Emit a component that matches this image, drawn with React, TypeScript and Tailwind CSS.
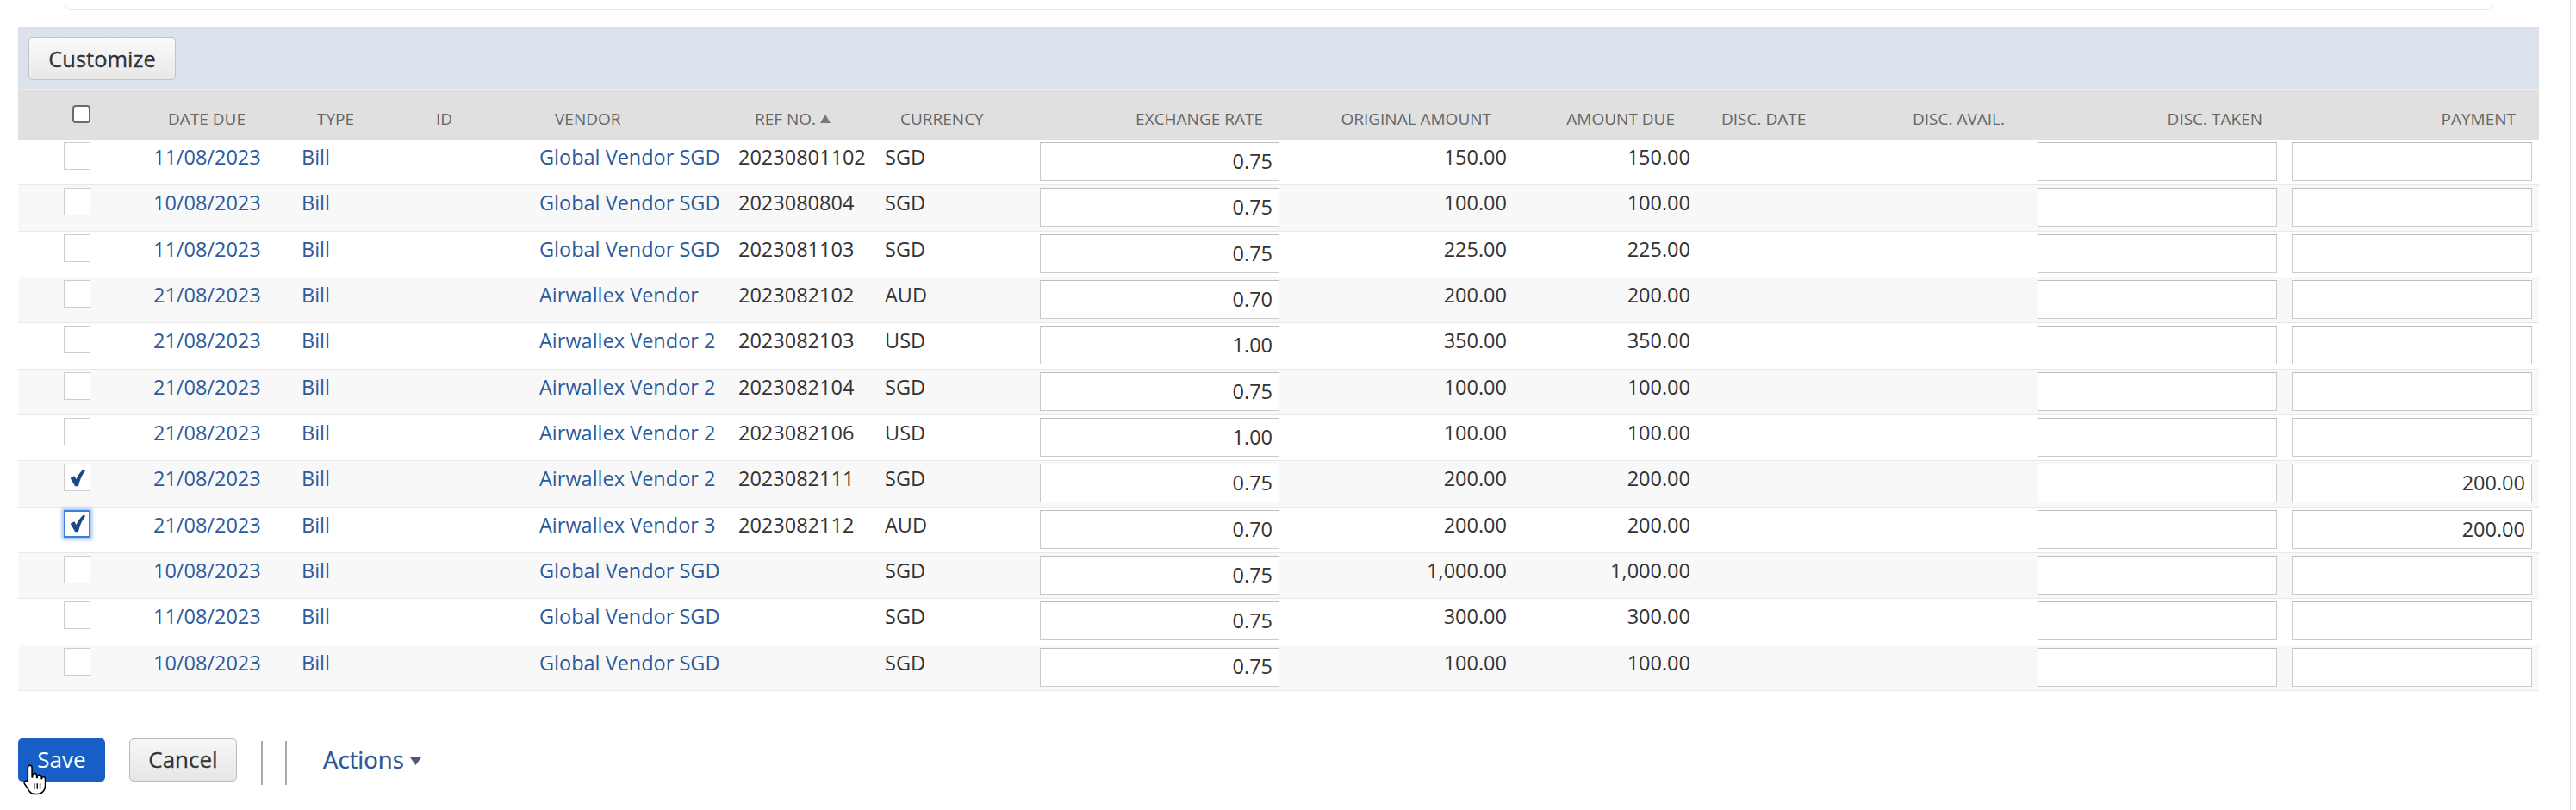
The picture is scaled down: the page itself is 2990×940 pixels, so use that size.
import React from "react";

type Row = {
  date: string;
  vendor: string;
  ref: string;
  cur: string;
  rate: string;
  orig: string;
  due: string;
  checked?: boolean;
  focus?: boolean;
  pay?: string;
};

const rows: Row[] = [
  { date: "11/08/2023", vendor: "Global Vendor SGD", ref: "20230801102", cur: "SGD", rate: "0.75", orig: "150.00", due: "150.00" },
  { date: "10/08/2023", vendor: "Global Vendor SGD", ref: "2023080804", cur: "SGD", rate: "0.75", orig: "100.00", due: "100.00" },
  { date: "11/08/2023", vendor: "Global Vendor SGD", ref: "2023081103", cur: "SGD", rate: "0.75", orig: "225.00", due: "225.00" },
  { date: "21/08/2023", vendor: "Airwallex Vendor", ref: "2023082102", cur: "AUD", rate: "0.70", orig: "200.00", due: "200.00" },
  { date: "21/08/2023", vendor: "Airwallex Vendor 2", ref: "2023082103", cur: "USD", rate: "1.00", orig: "350.00", due: "350.00" },
  { date: "21/08/2023", vendor: "Airwallex Vendor 2", ref: "2023082104", cur: "SGD", rate: "0.75", orig: "100.00", due: "100.00" },
  { date: "21/08/2023", vendor: "Airwallex Vendor 2", ref: "2023082106", cur: "USD", rate: "1.00", orig: "100.00", due: "100.00" },
  { date: "21/08/2023", vendor: "Airwallex Vendor 2", ref: "2023082111", cur: "SGD", rate: "0.75", orig: "200.00", due: "200.00", checked: true, pay: "200.00" },
  { date: "21/08/2023", vendor: "Airwallex Vendor 3", ref: "2023082112", cur: "AUD", rate: "0.70", orig: "200.00", due: "200.00", checked: true, focus: true, pay: "200.00" },
  { date: "10/08/2023", vendor: "Global Vendor SGD", ref: "", cur: "SGD", rate: "0.75", orig: "1,000.00", due: "1,000.00" },
  { date: "11/08/2023", vendor: "Global Vendor SGD", ref: "", cur: "SGD", rate: "0.75", orig: "300.00", due: "300.00" },
  { date: "10/08/2023", vendor: "Global Vendor SGD", ref: "", cur: "SGD", rate: "0.75", orig: "100.00", due: "100.00" },
];

const GRID =
  "grid grid-cols-[157px_172px_138px_138px_231px_170px_180px_278px_264px_213px_238px_165px_278px_17px_279px_8px]";

const HEAD = "pt-[21px] text-[19px] leading-[26px] text-[#666666] whitespace-nowrap";
const CELL = "pt-[4px] text-[23.5px] leading-[32px] whitespace-nowrap";
const LINK = "text-[#2c5a9c]";
const PLAIN = "text-[#333333]";

function Check() {
  return (
    <svg width="18" height="21" viewBox="0 0 18 21" className="block">
      <path
        d="M1.5 11 L5 9 L7.6 13.6 C9.6 8.4 12.4 4.2 16.4 1 L17.2 2.4 C13.6 6.6 11.2 12.2 9.4 19.6 L6.6 19.6 Z"
        fill="#1f4687"
        stroke="#1f4687"
        strokeWidth="1.3"
        strokeLinejoin="round"
      />
    </svg>
  );
}

function RowCheckbox({ checked, focus }: { checked?: boolean; focus?: boolean }) {
  if (focus) {
    return (
      <div className="ml-[53px] mt-[3px] w-[31px] h-[32px] bg-white border-2 border-[#3c7fe0] shadow-[0_0_4px_2px_rgba(80,140,230,0.55)] flex items-center justify-center">
        {checked && <Check />}
      </div>
    );
  }
  return (
    <div className="ml-[53px] mt-[3px] w-[31px] h-[32px] bg-white border border-[#cdcdcd] flex items-center justify-center">
      {checked && <Check />}
    </div>
  );
}

function Field({ value }: { value?: string }) {
  return (
    <div className="mt-[3px] h-[45px] w-full bg-white border border-[#cbcbcb] border-t-[#bdbdbd] flex items-center justify-end pr-[7px] text-[23.5px] text-[#333333]">
      {value}
    </div>
  );
}

function Hand() {
  return (
    <svg width="26" height="39" viewBox="0 0 17 25" className="absolute left-[27px] top-[886px]">
      <path
        d="M5 1.2c.9 0 1.6.7 1.6 1.6v7.4h.4V8.9c0-.9.7-1.6 1.6-1.6s1.6.7 1.6 1.6v1.6h.4V10c0-.9.7-1.6 1.6-1.6s1.6.7 1.6 1.6v1.3h.3c0-.7.6-1.3 1.3-1.3s1.3.6 1.3 1.3v5.2c0 3.4-2.4 6.5-5.8 6.5H8.6c-1.7 0-3.1-.9-4-2.2L1 15.3c-.5-.8-.3-1.8.4-2.2.7-.4 1.5-.3 2 .4l.1.2V2.8c0-.9.6-1.6 1.5-1.6z"
        fill="white"
        stroke="black"
        strokeWidth="1"
        strokeLinejoin="round"
      />
      <path d="M8.4 15v4.2M10.6 15v4.2M12.8 15v4.2" stroke="black" strokeWidth="0.9" />
    </svg>
  );
}

export default function App() {
  return (
    <div
      className="relative w-[2990px] h-[940px] bg-white overflow-hidden flex"
      style={{ fontFamily: "'Open Sans', 'Noto Sans', sans-serif" }}
    >
      <div className="w-[2983px] flex flex-col">
        {/* top card remnant */}
        <div className="ml-[75px] w-[2818px] h-[12px] bg-white border border-t-0 border-[#e4e4e4] rounded-b-[7px]" />

        {/* toolbar band */}
        <div className="mt-[19px] ml-[21px] w-[2926px] h-[72px] bg-[#dbe2eb] pl-[12px] pt-[12px]">
          <button className="h-[50px] w-[171px] rounded-[5px] border border-[#c4c4c4] bg-gradient-to-b from-[#fafafa] to-[#e8e8e8] text-[25.5px] text-[#333333] flex items-center justify-center [-webkit-text-stroke:0.3px_#333333]">
            Customize
          </button>
        </div>

        {/* table */}
        <div className="ml-[21px] w-[2926px]">
          <div className={`${GRID} h-[59px] bg-[#e0e0e0] border-t border-[#ececec]`}>
            <div className="pl-[63px] pt-[18px]">
              <div className="w-[21px] h-[21px] rounded-[4px] border-2 border-[#6b6b6b] bg-white" />
            </div>
            <div className={`${HEAD} pl-[17px]`}>DATE DUE</div>
            <div className={`${HEAD} pl-[18px]`}>TYPE</div>
            <div className={`${HEAD} pl-[18px]`}>ID</div>
            <div className={`${HEAD} pl-[18px]`}>VENDOR</div>
            <div className={`${HEAD} pl-[19px] flex items-start`}>
              <span>REF NO.</span>
              <svg width="12" height="10" viewBox="0 0 12 10" className="ml-[5px] mt-[8px]">
                <path d="M6 0 L12 10 L0 10 Z" fill="#777777" />
              </svg>
            </div>
            <div className={`${HEAD} pl-[18px]`}>CURRENCY</div>
            <div className={`${HEAD} text-right pr-[19px]`}>EXCHANGE RATE</div>
            <div className={`${HEAD} text-right pr-[18px]`}>ORIGINAL AMOUNT</div>
            <div className={`${HEAD} text-right pr-[18px]`}>AMOUNT DUE</div>
            <div className={`${HEAD} pl-[36px]`}>DISC. DATE</div>
            <div className={`${HEAD} pl-[20px]`}>DISC. AVAIL.</div>
            <div className={`${HEAD} text-right pr-[17px]`}>DISC. TAKEN</div>
            <div />
            <div className={`${HEAD} text-right pr-[19px]`}>PAYMENT</div>
            <div />
          </div>

          {rows.map((r, i) => (
            <div
              key={i}
              className={`${GRID} h-[53.33px] border-b border-[#e8e8e8] ${i % 2 === 1 ? "bg-[#f8f8f8]" : "bg-white"}`}
            >
              <div>
                <RowCheckbox checked={r.checked} focus={r.focus} />
              </div>
              <div className={`${CELL} ${LINK}`}>{r.date}</div>
              <div className={`${CELL} ${LINK}`}>Bill</div>
              <div />
              <div className={`${CELL} ${LINK}`}>{r.vendor}</div>
              <div className={`${CELL} ${PLAIN}`}>{r.ref}</div>
              <div className={`${CELL} ${PLAIN}`}>{r.cur}</div>
              <div>
                <Field value={r.rate} />
              </div>
              <div className={`${CELL} ${PLAIN} text-right`}>{r.orig}</div>
              <div className={`${CELL} ${PLAIN} text-right`}>{r.due}</div>
              <div />
              <div />
              <div>
                <Field />
              </div>
              <div />
              <div>
                <Field value={r.pay} />
              </div>
              <div />
            </div>
          ))}
        </div>

        {/* bottom buttons */}
        <div className="mt-[55px] ml-[21px] flex items-start h-[54px]">
          <button className="w-[101px] h-[50px] rounded-[5px] bg-[#175fc7] text-white text-[26px] flex items-center justify-center">
            Save
          </button>
          <button className="ml-[28px] w-[125px] h-[50px] rounded-[5px] border border-[#b9b9b9] bg-gradient-to-b from-[#f7f7f7] to-[#e6e6e6] text-[#333333] text-[26px] flex items-center justify-center [-webkit-text-stroke:0.3px_#333333]">
            Cancel
          </button>
          <div className="ml-[28px] mt-[3px] w-[2px] h-[51px] bg-[#a9a9a9]" />
          <div className="ml-[26px] mt-[3px] w-[2px] h-[51px] bg-[#a9a9a9]" />
          <div className="ml-[42px] h-[50px] flex items-center text-[27.5px] text-[#2b5595] [-webkit-text-stroke:0.3px_#2b5595]">
            <span>Actions</span>
            <svg width="13" height="9" viewBox="0 0 13 9" className="ml-[7px] mt-[4px]">
              <path d="M0 0 L13 0 L6.5 9 Z" fill="#4a5b78" />
            </svg>
          </div>
        </div>
      </div>
      <div className="w-px h-full bg-[#e3e3e3]" />
      <Hand />
    </div>
  );
}
